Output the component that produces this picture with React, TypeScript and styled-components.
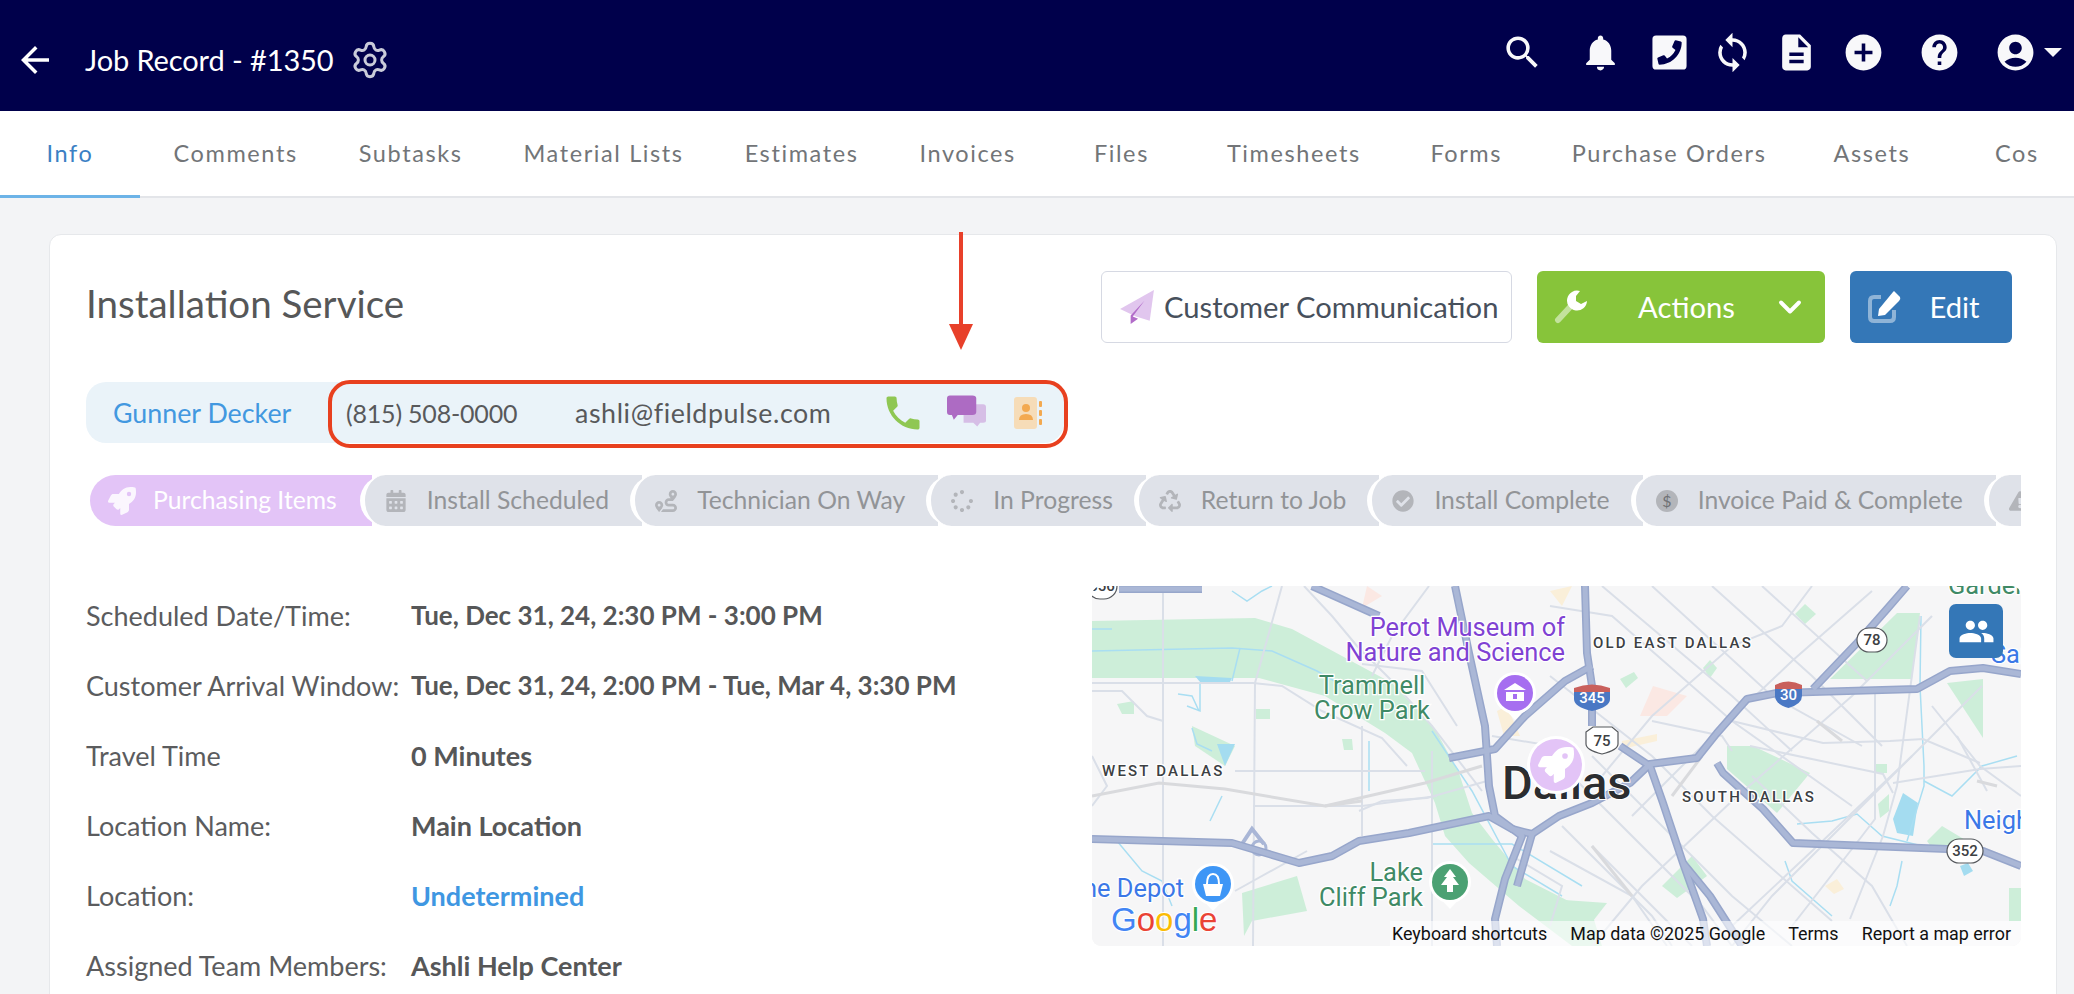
import React from 'react';
import styled, { createGlobalStyle } from 'styled-components';
import { Settings, ChevronDown } from 'lucide-react';
import {
  MdArrowBack,
  MdSearch,
  MdNotifications,
  MdSync,
  MdDescription,
  MdAddCircle,
  MdHelp,
  MdAccountCircle,
  MdPhone,
  MdPeople,
} from 'react-icons/md';
import {
  FaPhoneSquareAlt,
  FaRocket,
  FaCalendarAlt,
  FaRoute,
  FaSpinner,
  FaRecycle,
  FaCheckCircle,
  FaExclamationTriangle,
} from 'react-icons/fa';

const FONT = `Lato, "Noto Sans", "Liberation Sans", sans-serif`;

const GlobalStyle = createGlobalStyle`
  html, body {
    margin: 0;
    padding: 0;
    background: #f3f4f6;
  }
  * {
    box-sizing: border-box;
  }
`;

const Page = styled.div`
  width: 2074px;
  height: 994px;
  overflow: hidden;
  background: #f3f4f6;
  font-family: ${FONT};
`;

const TopBar = styled.header`
  height: 111px;
  background: #00004b;
  display: flex;
  align-items: center;
  padding: 0 12px 6px 14px;
  color: #fff;
`;

const TitleGroup = styled.div`
  display: flex;
  align-items: center;
  margin-top: 14px;
`;

const BackButton = styled.span`
  display: flex;
  font-size: 42px;
  margin-right: 29px;
`;

const PageTitle = styled.div`
  font-size: 29px;
  letter-spacing: -0.1px;
  color: #fff;
`;

const GearIcon = styled(Settings)`
  width: 40px;
  height: 40px;
  margin-left: 16px;
  color: #c9cbd9;
`;

const TopIcons = styled.div`
  margin-left: auto;
  display: flex;
  align-items: center;
`;

const TopIcon = styled.span<{ $gap: number }>`
  display: flex;
  width: 43px;
  height: 43px;
  align-items: center;
  justify-content: center;
  font-size: 43px;
  color: #f8f8fa;
  margin-left: ${(p) => p.$gap}px;
`;

const MirroredPhone = styled(FaPhoneSquareAlt)`
  transform: scaleX(-1);
`;

const Caret = styled.span`
  width: 0;
  height: 0;
  margin-left: 7px;
  border-left: 9px solid transparent;
  border-right: 9px solid transparent;
  border-top: 9px solid #f8f8fa;
`;

const TabBar = styled.nav`
  height: 87px;
  background: #fff;
  box-shadow: inset 0 -2px 0 #e3e5e9;
  display: flex;
  padding-right: 37px;
  overflow: hidden;
`;

const TabClip = styled.div`
  display: flex;
  gap: 4px;
  width: 100%;
  overflow: hidden;
`;

const Tab = styled.div<{ $active?: boolean }>`
  flex: none;
  min-width: ${(p) => (p.$active ? 140 : 146)}px;
  height: 87px;
  padding: 0 28.5px;
  margin-right: ${(p) => (p.$active ? 1 : 0)}px;
  display: flex;
  align-items: center;
  justify-content: center;
  font-size: 23.5px;
  letter-spacing: 1.6px;
  color: ${(p) => (p.$active ? '#3b80c4' : '#727578')};
  border-bottom: 3px solid ${(p) => (p.$active ? '#6cb3e7' : 'transparent')};
`;

const Content = styled.main`
  padding: 36px 17px 0 49px;
`;

const Card = styled.section`
  position: relative;
  background: #fff;
  border: 1px solid #e6e8eb;
  border-radius: 12px;
  height: 900px;
  padding: 36px 35px 0 36px;
`;

const TitleRow = styled.div`
  display: flex;
  align-items: center;
  justify-content: space-between;
  padding-right: 9px;
`;

const JobTitle = styled.h1`
  margin: 0 0 8px;
  font-size: 38.5px;
  font-weight: 400;
  color: #565758;
`;

const ButtonRow = styled.div`
  display: flex;
  gap: 25px;
`;

const ActionButton = styled.button<{ $bg: string; $width: number; $outline?: boolean }>`
  display: flex;
  align-items: center;
  width: ${(p) => p.$width}px;
  height: 72px;
  padding: 0 ${(p) => (p.$outline ? 0 : 17)}px 0 17px;
  border-radius: 6px;
  font-family: ${FONT};
  font-size: 29.2px;
  color: ${(p) => (p.$outline ? '#47505c' : '#fff')};
  background: ${(p) => p.$bg};
  border: ${(p) => (p.$outline ? '1.5px solid #d6d9e3' : 'none')};

  & > svg {
    flex: none;
  }
`;

const ButtonLabel = styled.span<{ $inset?: number }>`
  flex: 1;
  padding: 0 0 2px ${(p) => p.$inset ?? 13}px;
  text-align: ${(p) => (p.$inset ? 'left' : 'center')};
  white-space: nowrap;
`;

const ContactPill = styled.div`
  position: relative;
  display: flex;
  align-items: center;
  width: 978px;
  height: 61px;
  margin-top: 39px;
  background: #eaf3f9;
  border-radius: 20px;
  font-size: 26.8px;
  color: #58595b;
`;

const ContactName = styled.span`
  width: 260px;
  padding-left: 27px;
  color: #4298e0;
`;

const ContactPhone = styled.span`
  width: 229px;
  font-size: 25px;
  letter-spacing: -0.2px;
`;

const ContactEmail = styled.span`
  letter-spacing: 0.6px;
`;

const ContactIcons = styled.span`
  margin-left: auto;
  display: flex;
  align-items: center;
  gap: 28px;
  padding-right: 22px;
`;

const PhoneGlyph = styled(MdPhone)`
  width: 44px;
  height: 44px;
  margin-right: -6px;
  color: #8fc753;
`;

const ChatWrap = styled.span`
  display: flex;
  margin-top: -4px;
`;

const HighlightBox = styled.div`
  position: absolute;
  left: 242px;
  top: -2px;
  width: 740px;
  height: 68px;
  border: 4px solid #e8401f;
  border-radius: 22px;
`;

const ArrowMark = styled.svg`
  position: absolute;
  left: 898px;
  top: -3px;
`;

const Stepper = styled.div`
  display: flex;
  height: 51px;
  margin: 32px 0 0 4px;
  overflow: hidden;
  font-size: 24.7px;
`;

const Step = styled.div<{ $active?: boolean }>`
  flex: none;
  display: flex;
  align-items: center;
  height: 51px;
  padding: 0 ${(p) => (p.$active ? 35 : 33)}px 3px ${(p) => (p.$active ? 18 : 20)}px;
  gap: ${(p) => (p.$active ? 17 : 20)}px;
  margin-left: ${(p) => (p.$active ? 0 : -12)}px;
  background: ${(p) => (p.$active ? '#e3c4f7' : '#dfe2e9')};
  color: ${(p) => (p.$active ? '#fff' : '#929497')};
  border-left: ${(p) => (p.$active ? 'none' : '5px solid #fff')};
  border-radius: 26px 0 0 26px;
  white-space: nowrap;
`;

const StepIcon = styled.span<{ $active?: boolean }>`
  display: flex;
  align-items: center;
  justify-content: center;
  width: ${(p) => (p.$active ? 28 : 22)}px;
  margin-top: 3px;
  font-size: ${(p) => (p.$active ? 28 : 22)}px;
  color: ${(p) => (p.$active ? 'rgba(255,255,255,0.85)' : '#b3b5ba')};
`;

const LowerRow = styled.div`
  display: flex;
  justify-content: space-between;
  margin-top: 54px;
`;

const DetailList = styled.div`
  display: flex;
  flex-direction: column;
`;

const DetailRow = styled.div`
  display: grid;
  grid-template-columns: 325px 1fr;
  height: 70px;
  align-items: center;
  font-size: 27px;
`;

const DetailLabel = styled.span`
  color: #5b5c5e;
`;

const DetailValue = styled.span<{ $link?: boolean; $dates?: boolean }>`
  font-weight: 700;
  font-size: ${(p) => (p.$dates ? 26 : 27)}px;
  color: ${(p) => (p.$link ? '#3f97e2' : '#565758')};
`;

const MapBox = styled.div`
  position: relative;
  width: 929px;
  height: 360px;
  margin-top: 6px;
  border-radius: 9px;
  overflow: hidden;
  background: #f6f6f7;
`;

const MapCanvas = styled.svg`
  display: block;
`;

const PlaceLabel = styled.text`
  font-family: Roboto, sans-serif;
  font-size: 25.4px;
  paint-order: stroke;
  stroke: #fff;
  stroke-width: 2.5px;
`;

const AreaLabel = styled.text`
  font-family: Roboto, sans-serif;
  font-size: 15px;
  font-weight: 500;
  letter-spacing: 2.2px;
  fill: #3c4043;
  paint-order: stroke;
  stroke: #fff;
  stroke-width: 2.5px;
`;

const ShieldText = styled.text`
  font-family: Roboto, sans-serif;
  font-size: 15px;
  font-weight: 500;
  text-anchor: middle;
`;

const MapTeamButton = styled.button`
  position: absolute;
  top: 18px;
  right: 18px;
  width: 54px;
  height: 54px;
  border: none;
  border-radius: 7px;
  padding: 0;
  background: #3477b7;
  color: #fff;
  font-size: 37px;
  display: flex;
  align-items: center;
  justify-content: center;
`;

const MapFooter = styled.div`
  position: absolute;
  left: 298px;
  right: 0;
  bottom: 0;
  height: 25px;
  padding: 0 10px 0 2px;
  display: flex;
  align-items: center;
  justify-content: space-between;
  background: rgba(255, 255, 255, 0.6);
  font-family: Roboto, sans-serif;
  font-size: 17.9px;
  color: #111;
`;

const TABS = [
  'Info',
  'Comments',
  'Subtasks',
  'Material Lists',
  'Estimates',
  'Invoices',
  'Files',
  'Timesheets',
  'Forms',
  'Purchase Orders',
  'Assets',
  'Cost',
];

const DETAILS = [
  { label: 'Scheduled Date/Time:', value: 'Tue, Dec 31, 24, 2:30 PM - 3:00 PM', dates: true },
  { label: 'Customer Arrival Window:', value: 'Tue, Dec 31, 24, 2:00 PM - Tue, Mar 4, 3:30 PM', dates: true },
  { label: 'Travel Time', value: '0 Minutes' },
  { label: 'Location Name:', value: 'Main Location' },
  { label: 'Location:', value: 'Undetermined', link: true },
  { label: 'Assigned Team Members:', value: 'Ashli Help Center' },
];

const DollarIcon = () => (
  <svg width="22" height="22" viewBox="0 0 22 22">
    <circle cx="11" cy="11" r="11" fill="#b3b5ba" />
    <text x="11" y="17" fontSize="16" fontFamily="Lato, sans-serif" textAnchor="middle" fill="#6f7175">
      $
    </text>
  </svg>
);

const STEPS = [
  { id: 'purchasing', label: 'Purchasing Items', icon: <FaRocket />, active: true },
  { id: 'scheduled', label: 'Install Scheduled', icon: <FaCalendarAlt /> },
  { id: 'way', label: 'Technician On Way', icon: <FaRoute /> },
  { id: 'progress', label: 'In Progress', icon: <FaSpinner /> },
  { id: 'return', label: 'Return to Job', icon: <FaRecycle /> },
  { id: 'complete', label: 'Install Complete', icon: <FaCheckCircle /> },
  { id: 'paid', label: 'Invoice Paid & Complete', icon: <DollarIcon /> },
  { id: 'warning', label: '', icon: <FaExclamationTriangle /> },
];

const PlaneIcon = () => (
  <svg width="36" height="36" viewBox="0 0 34 34">
    <path d="M1 19 L33 1 L29 30 L16 26 Z" fill="#e1c6ee" />
    <path d="M24 11 L11 25 L11 33 L18 28 L13 26 Z" fill="#b26cc9" />
  </svg>
);

const WrenchIcon = () => (
  <svg width="34" height="34" viewBox="0 0 34 34">
    <path d="M4 30 L17 16" stroke="rgba(255,255,255,0.5)" strokeWidth="6" strokeLinecap="round" />
    <path d="M26 1 A10 10 0 1 0 33 11 L27 14 L22 11 L22 6 Z" fill="#fff" />
  </svg>
);

const EditIcon = () => (
  <svg width="34" height="34" viewBox="0 0 34 34">
    <path
      d="M14 7 H7 Q3 7 3 11 V27 Q3 31 7 31 H23 Q27 31 27 27 V20"
      fill="none"
      stroke="rgba(255,255,255,0.45)"
      strokeWidth="4"
    />
    <path d="M27 1 L33 7 Q34 9 32 11 L18 25 L11 26 L12 19 L26 2 Z" fill="#fff" />
  </svg>
);

const ChatIcon = () => (
  <svg width="39" height="32" viewBox="0 0 40 32">
    <path d="M17 9 H37 Q40 9 40 12 V26 Q40 28 37 28 H34 L31 32 L27 28 H17 Z" fill="#d6bee6" />
    <path d="M3 0 H26 Q30 0 30 3 V17 Q30 20 26 20 H11 L7 25 L5 20 H3 Q0 20 0 17 V3 Q0 0 3 0 Z" fill="#ad6bc3" />
  </svg>
);

const AddressIcon = () => (
  <svg width="28" height="32" viewBox="0 0 28 32">
    <rect x="0" y="0" width="23" height="32" rx="3" fill="#f6dcb8" />
    <circle cx="12" cy="11" r="4" fill="#f3a950" />
    <path d="M5 23 Q5 17 12 17 Q19 17 19 23 Z" fill="#f3a950" />
    <rect x="25" y="4" width="3" height="6" rx="1" fill="#f3a950" />
    <rect x="25" y="13" width="3" height="6" rx="1" fill="#f3a950" />
    <rect x="25" y="22" width="3" height="6" rx="1" fill="#f3a950" />
  </svg>
);

const PARKS = [
  '0,35 163,32 200,43 250,70 300,97 343,143 367,187 380,227 400,253 433,293 500,327 510,360 480,360 427,320 377,277 353,250 343,217 320,167 293,147 233,110 167,92 0,92',
  '635,160 661,160 718,187 685,227 635,183',
  '738,93 805,27 828,27 820,93',
  '855,97 891,93 891,152',
  '703,28 713,18 724,28 713,38',
  '611,82 618,74 625,82 618,92',
  '528,93 542,86 546,92 534,102',
  '458,313 515,317 501,335 458,335',
  '100,140 143,160 133,180 103,160',
  '150,307 205,290 215,325 160,335 152,350',
  '25,118 42,115 42,128 30,128',
  '164,123 178,123 178,133 164,133',
  '250,153 260,153 261,164 252,164',
  '783,178 795,178 795,187 783,187',
  '786,218 797,208 797,225 788,232',
  '600,270 615,290 585,312 570,300',
  '835,255 850,240 880,258 840,262',
  '917,302 929,302 929,335 917,335',
];

const WATER = [
  '125,158 143,158 133,180',
  '801,233 811,207 826,217 821,250 805,247',
  '103,90 140,92 138,96 108,96',
  '868,280 876,277 881,285 872,290',
];

const RIVERS = [
  '0,65 140,62 180,65 225,85 260,105',
  '0,43 20,43',
  '140,5 155,15 170,5 180,0',
  '148,62 140,95',
  '86,108 100,110 107,125',
  '108,98 108,125 95,120',
  '100,142 105,158 120,165',
  '277,155 277,205',
  '130,210 118,235',
  '25,255 50,285 70,295 80,320',
  '340,145 380,205 420,280 470,310',
  '340,258 420,258 490,300',
  '705,238 740,235 765,228 790,250 830,260',
  '829,30 828,100 832,180 832,200 815,255',
  '832,195 860,210 890,180 925,170',
  '693,275 700,295 740,330',
  '810,275 805,300 798,320',
];

const SMALL_ROADS = [
  '71,0 71,360',
  '190,0 163,97 161,360',
  '0,97 161,97 190,100 230,125 290,152 315,180',
  '143,185 333,185',
  '0,170 15,200 0,220',
  '337,0 300,50 280,90',
  '212,0 240,30 265,60 300,95 340,140 390,205',
  '270,78 330,85 365,140',
  '270,140 270,250',
  '340,165 340,360',
  '0,105 30,105 55,130 71,135',
  '161,220 270,220 345,210',
  '267,225 290,215 335,212 395,195',
  '143,305 215,265',
  '400,150 460,160',
  '458,20 520,30 640,135 760,220',
  '510,0 640,110 700,165',
  '560,0 680,110 770,160',
  '620,0 720,90 790,160',
  '670,0 775,95',
  '458,90 560,170 620,230 740,335',
  '500,170 640,310 700,360',
  '480,190 610,320 640,360',
  '470,240 560,330 580,360',
  '720,0 690,40 640,60 560,130 510,190',
  '780,5 700,75 600,170 540,230',
  '840,30 760,110 640,215 550,300 500,360',
  '890,100 800,190 680,310 640,360',
  '820,170 720,265 640,340',
  '640,135 731,157 798,155 831,153 888,177',
  '658,160 791,188 801,207',
  '801,197 888,183 929,180',
  '783,107 783,233 770,250 700,340',
  '828,30 805,200 791,250 758,333',
  '660,190 720,247 780,300 815,360',
  '840,120 860,145 888,180 929,210',
  '500,260 560,320 600,360',
  '458,265 540,310 575,360',
  '560,135 630,150 640,165',
  '420,270 470,300 458,340',
  '865,150 895,205',
];

const GRAY_ROADS = [
  '0,210 67,197 133,203 233,220 333,197 390,180',
  '233,220 270,215',
  '500,260 540,310',
  '580,210 610,170',
  '725,135 750,155',
  '885,195 905,200',
];

const MAJOR_ROADS = [
  '27,3 110,3',
  '0,253 140,257 207,277 240,270 267,255 317,247 397,230 420,243 440,248 467,230 500,217 538,197 558,178 605,172 625,147 655,113 685,107 825,103 858,85 891,82 929,88',
  '363,0 377,67 393,140 397,200 403,230 430,250 413,293 403,333 405,360',
  '220,0 287,30',
  '493,0 495,67 500,100 500,140',
  '500,80 473,95 433,130 403,163 357,172',
  '528,160 558,180 571,217 591,277 611,333 615,360',
  '591,277 618,310 650,360',
  '625,177 631,187 671,223 701,257 855,263 891,265 929,280',
  '721,103 765,57 795,23 815,0',
  '440,248 425,300',
];

const InterstateShield = ({ x, y, w, label }: { x: number; y: number; w: number; label: string }) => (
  <g transform={`translate(${x} ${y})`}>
    <path d={`M0 5 Q${w / 2} -2 ${w} 5 V10 H0 Z`} fill="#c9605c" />
    <path d={`M0 9 H${w} V16 Q${w} 24 ${w / 2} 28 Q0 24 0 16 Z`} fill="#4a78c4" />
    <ShieldText x={w / 2} y={20} fill="#fff">
      {label}
    </ShieldText>
  </g>
);

const OvalShield = ({ x, y, rx, ry, label }: { x: number; y: number; rx: number; ry: number; label: string }) => (
  <g>
    <rect x={x - rx} y={y - ry} width={rx * 2} height={ry * 2} rx={ry} fill="#fff" stroke="#55585c" strokeWidth="1.2" />
    <ShieldText x={x} y={y + 5} fill="#3c4043">
      {label}
    </ShieldText>
  </g>
);

const MapPin = ({ x, y, r, color, tail = true, children }: { x: number; y: number; r: number; color: string; tail?: boolean; children: React.ReactNode }) => (
  <g>
    {tail && <path d={`M${x - r} ${y + 8} L${x} ${y + r + 9} L${x + r} ${y + 8} Z`} fill="#fff" />}
    <circle cx={x} cy={y} r={r + 3} fill="#fff" />
    <circle cx={x} cy={y} r={r} fill={color} />
    {children}
  </g>
);

const DallasMap = () => (
  <MapCanvas width="929" height="360" viewBox="0 0 929 360">
    <rect width="929" height="360" fill="#f6f6f7" />
    <polygon points="548,130 561,100 595,110 575,130" fill="#fbe8e3" />
    <polygon points="275,0 290,10 270,22" fill="#fbe8e3" />
    <polygon points="530,155 565,148 565,155 530,163" fill="#faefd9" />
    <polygon points="405,125 415,120 428,150 412,150" fill="#faefd9" />
    <polygon points="458,5 480,0 470,20" fill="#faefd9" />
    <polygon points="733,300 745,293 752,303 742,308" fill="#faefd9" />
    {PARKS.map((p) => (
      <polygon key={p} points={p} fill="#cdeed9" />
    ))}
    {WATER.map((p) => (
      <polygon key={p} points={p} fill="#a4dcf0" />
    ))}
    {RIVERS.map((p) => (
      <polyline key={p} points={p} fill="none" stroke="#a9def2" strokeWidth="1.5" />
    ))}
    {SMALL_ROADS.map((p) => (
      <polyline key={p} points={p} fill="none" stroke="#dadfe8" strokeWidth="2" />
    ))}
    {GRAY_ROADS.map((p) => (
      <polyline key={p} points={p} fill="none" stroke="#d9dadd" strokeWidth="3" />
    ))}
    <polyline points="150,258 160,243 172,258" fill="none" stroke="#a9b6d6" strokeWidth="4" />
    <circle cx="167" cy="262" r="7" fill="none" stroke="#a9b6d6" strokeWidth="3" />
    {MAJOR_ROADS.map((p) => (
      <polyline key={p} points={p} fill="none" stroke="#97a6cb" strokeWidth="8" strokeLinejoin="round" />
    ))}
    {MAJOR_ROADS.map((p) => (
      <polyline key={`${p}-in`} points={p} fill="none" stroke="#aab7d6" strokeWidth="5" strokeLinejoin="round" />
    ))}

    <PlaceLabel x={473} y={50} textAnchor="end" fill="#7f42d3">Perot Museum of</PlaceLabel>
    <PlaceLabel x={473} y={75} textAnchor="end" fill="#7f42d3">Nature and Science</PlaceLabel>
    <PlaceLabel x={280} y={108} textAnchor="middle" fill="#3f8a66">Trammell</PlaceLabel>
    <PlaceLabel x={280} y={133} textAnchor="middle" fill="#3f8a66">Crow Park</PlaceLabel>
    <PlaceLabel x={331} y={295} textAnchor="end" fill="#3f8a66">Lake</PlaceLabel>
    <PlaceLabel x={331} y={320} textAnchor="end" fill="#3f8a66">Cliff Park</PlaceLabel>
    <PlaceLabel x={92} y={311} textAnchor="end" fill="#3b78e7">Home Depot</PlaceLabel>
    <PlaceLabel x={872} y={243} fill="#3b78e7">Neighborhood</PlaceLabel>
    <PlaceLabel x={856} y={8} fill="#3f8a66">Garden</PlaceLabel>
    <PlaceLabel x={899} y={77} fill="#3b78e7">Sam</PlaceLabel>
    <AreaLabel x={10} y={190}>WEST DALLAS</AreaLabel>
    <AreaLabel x={501} y={62}>OLD EAST DALLAS</AreaLabel>
    <AreaLabel x={590} y={216}>SOUTH DALLAS</AreaLabel>
    <text x={410} y={213} fontFamily="Roboto, sans-serif" fontSize="47" fontWeight="500" fill="#2b2d30" stroke="#fff" strokeWidth="2" paintOrder="stroke">
      Dallas
    </text>

    <InterstateShield x={482} y={97} w={36} label="345" />
    <InterstateShield x={683} y={94} w={27} label="30" />
    <g>
      <path d="M494 146 L501 141 H520 L526 146 V158 Q526 164 510 168 Q494 164 494 158 Z" fill="#fff" stroke="#55585c" strokeWidth="1.2" />
      <ShieldText x={510} y={160} fill="#3c4043">75</ShieldText>
    </g>
    <OvalShield x={780} y={54} rx={15} ry={12} label="78" />
    <OvalShield x={873} y={265} rx={18} ry={12} label="352" />
    <OvalShield x={10} y={0} rx={15} ry={13} label="356" />

    <MapPin x={423} y={107} r={18} color="#a66ef0">
      <path d="M412 104 L423 97 L434 104 Z M414 106 H432 V115 H414 Z" fill="#fff" />
      <path d="M421 108 H425 V113 H421 Z" fill="#a66ef0" />
    </MapPin>
    <MapPin x={358} y={296} r={18} color="#4ba173">
      <path d="M358 283 L364 291 H361 L367 299 H361 V306 H355 V299 H349 L355 291 H352 Z" fill="#fff" />
    </MapPin>
    <MapPin x={121} y={298} r={18} color="#3e96f6">
      <path d="M111 298 H131 L128 310 H114 Z" fill="#fff" />
      <path d="M115 298 Q115 288 121 288 Q127 288 127 298" stroke="#fff" strokeWidth="2" fill="none" />
    </MapPin>
    <MapPin x={464} y={179} r={26} color="#e3c4f7" tail={false}>
      <FaRocket x={446} y={161} size={36} color="#fff" />
    </MapPin>

    <text x={19} y={345} fontFamily="Liberation Sans, sans-serif" fontSize="33" stroke="#fff" strokeWidth="2" paintOrder="stroke">
      <tspan fill="#4285f4">G</tspan>
      <tspan fill="#ea4335">o</tspan>
      <tspan fill="#fbbc05">o</tspan>
      <tspan fill="#4285f4">g</tspan>
      <tspan fill="#34a853">l</tspan>
      <tspan fill="#ea4335">e</tspan>
    </text>
  </MapCanvas>
);

export default function App() {
  return (
    <>
      <GlobalStyle />
      <Page>
        <TopBar>
          <TitleGroup>
            <BackButton>
              <MdArrowBack />
            </BackButton>
            <PageTitle>Job Record - #1350</PageTitle>
            <GearIcon strokeWidth={1.8} />
          </TitleGroup>
          <TopIcons>
            <TopIcon $gap={0}><MdSearch /></TopIcon>
            <TopIcon $gap={35}><MdNotifications /></TopIcon>
            <TopIcon $gap={26}><MirroredPhone size={39} /></TopIcon>
            <TopIcon $gap={20}><MdSync /></TopIcon>
            <TopIcon $gap={21}><MdDescription /></TopIcon>
            <TopIcon $gap={24}><MdAddCircle /></TopIcon>
            <TopIcon $gap={33}><MdHelp /></TopIcon>
            <TopIcon $gap={33}><MdAccountCircle /></TopIcon>
            <Caret />
          </TopIcons>
        </TopBar>
        <TabBar>
          <TabClip>
            {TABS.map((t, i) => (
              <Tab key={t} $active={i === 0}>{t}</Tab>
            ))}
          </TabClip>
        </TabBar>
        <Content>
          <Card>
            <TitleRow>
              <JobTitle>Installation Service</JobTitle>
              <ButtonRow>
                <ActionButton $bg="#fff" $width={411} $outline>
                  <PlaneIcon />
                  <ButtonLabel $inset={9}>Customer Communication</ButtonLabel>
                </ActionButton>
                <ActionButton $bg="#87c43a" $width={288}>
                  <WrenchIcon />
                  <ButtonLabel>Actions</ButtonLabel>
                  <ChevronDown size={36} strokeWidth={2.6} />
                </ActionButton>
                <ActionButton $bg="#3477b7" $width={162}>
                  <EditIcon />
                  <ButtonLabel>Edit</ButtonLabel>
                </ActionButton>
              </ButtonRow>
            </TitleRow>
            <ContactPill>
              <ContactName>Gunner Decker</ContactName>
              <ContactPhone>(815) 508-0000</ContactPhone>
              <ContactEmail>ashli@fieldpulse.com</ContactEmail>
              <ContactIcons>
                <PhoneGlyph />
                <ChatWrap>
                  <ChatIcon />
                </ChatWrap>
                <AddressIcon />
              </ContactIcons>
              <HighlightBox />
            </ContactPill>
            <ArrowMark width="26" height="118" viewBox="0 0 26 118">
              <rect x="11" y="0" width="4" height="93" fill="#e8402a" />
              <path d="M1 92 H25 L13 118 Z" fill="#e8402a" />
            </ArrowMark>
            <Stepper>
              {STEPS.map((s) => (
                <Step key={s.id} $active={s.active}>
                  <StepIcon $active={s.active}>{s.icon}</StepIcon>
                  {s.label && <span>{s.label}</span>}
                </Step>
              ))}
            </Stepper>
            <LowerRow>
              <DetailList>
                {DETAILS.map((d) => (
                  <DetailRow key={d.label}>
                    <DetailLabel>{d.label}</DetailLabel>
                    <DetailValue $link={d.link} $dates={d.dates}>{d.value}</DetailValue>
                  </DetailRow>
                ))}
              </DetailList>
              <MapBox>
                <DallasMap />
                <MapTeamButton>
                  <MdPeople />
                </MapTeamButton>
                <MapFooter>
                  <span>Keyboard shortcuts</span>
                  <span>Map data ©2025 Google</span>
                  <span>Terms</span>
                  <span>Report a map error</span>
                </MapFooter>
              </MapBox>
            </LowerRow>
          </Card>
        </Content>
      </Page>
    </>
  );
}
